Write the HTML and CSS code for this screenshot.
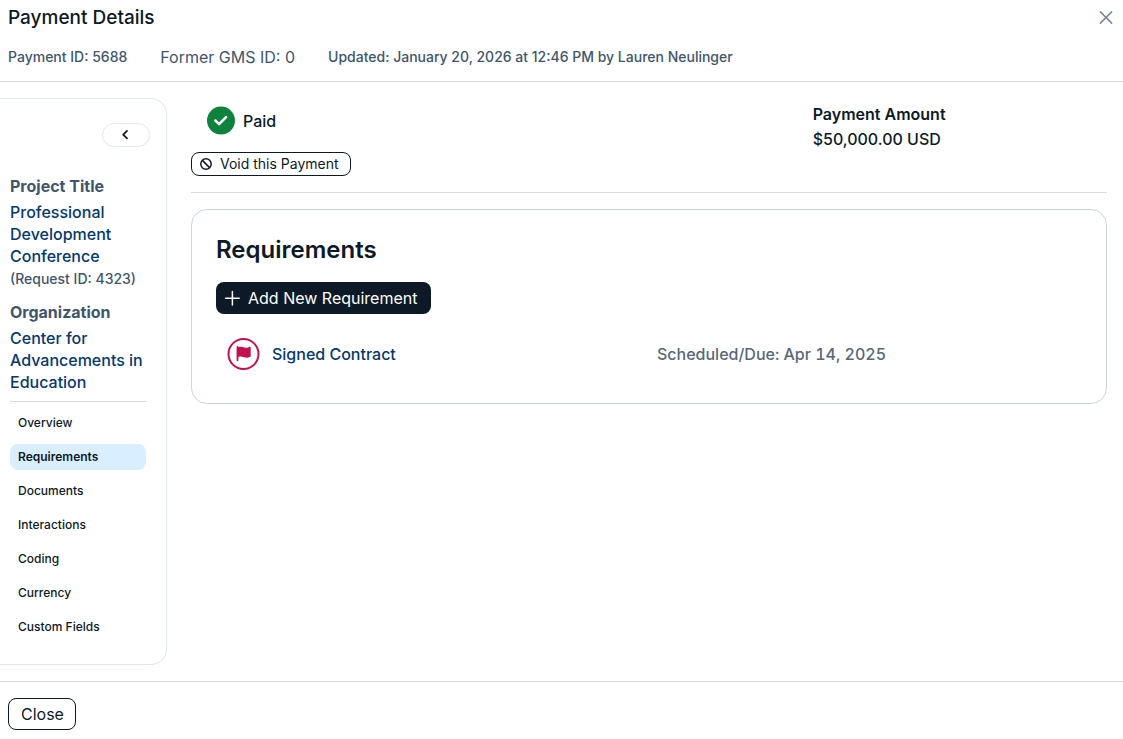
FILE: index.html
```html
<!DOCTYPE html>
<html lang="en">
<head>
<meta charset="utf-8">
<meta name="viewport" content="width=device-width, initial-scale=1">
<title>Payment Details</title>
<link rel="stylesheet" href="styles.css">
</head>
<body>
<div class="dialog">
  <header class="header">
    <div class="header-top">
      <h1 class="title">Payment Details</h1>
      <button class="dismiss" type="button" aria-label="Dismiss">
        <svg width="16" height="16" viewBox="0 0 16 16" fill="none" stroke="currentColor" stroke-width="1.5" stroke-linecap="round"><path d="M2.400 1.900 13.600 13.100M13.600 1.900 2.400 13.100"/></svg>
      </button>
    </div>
    <div class="meta">
      <span>Payment ID: 5688</span>
      <span class="meta-large">Former GMS ID: 0</span>
      <span>Updated: January 20, 2026 at 12:46 PM by Lauren Neulinger</span>
    </div>
  </header>

  <div class="body">
    <aside class="sidebar">
      <button class="collapse" type="button" aria-label="Collapse sidebar">
        <svg width="10" height="12" viewBox="0 0 10 12" fill="none" stroke="currentColor" stroke-width="1.7" stroke-linecap="round" stroke-linejoin="round"><path d="M6 1.800 2.200 5.600 6 9.400"/></svg>
      </button>
      <div class="summary">
        <section class="fact">
          <h2 class="fact-label">Project Title</h2>
          <a class="fact-link" href="#project">Professional Development Conference</a>
          <span class="fact-note">(Request ID: 4323)</span>
        </section>
        <section class="fact">
          <h2 class="fact-label">Organization</h2>
          <a class="fact-link" href="#organization">Center for Advancements in Education</a>
        </section>
      </div>
      <nav class="nav" aria-label="Payment sections">
        <a class="nav-item" href="#overview">Overview</a>
        <a class="nav-item nav-item-active" href="#requirements" aria-current="page">Requirements</a>
        <a class="nav-item" href="#documents">Documents</a>
        <a class="nav-item" href="#interactions">Interactions</a>
        <a class="nav-item" href="#coding">Coding</a>
        <a class="nav-item" href="#currency">Currency</a>
        <a class="nav-item" href="#custom-fields">Custom Fields</a>
      </nav>
    </aside>

    <main class="main">
      <div class="overview">
        <div class="status-column">
          <div class="status">
            <svg width="28" height="28" viewBox="0 0 28 28" fill="none"><circle cx="14" cy="13.600" r="14" fill="#0e813d"/><path d="m8.400 13.500 3.700 3.700 7-7" stroke="#fff" stroke-width="2.500" stroke-linecap="round" stroke-linejoin="round"/></svg>
            <span>Paid</span>
          </div>
          <button class="void" type="button">
            <svg width="12" height="12" viewBox="0 0 12 12" fill="none" stroke="currentColor" stroke-width="1.500"><circle cx="6" cy="6" r="5.200"/><path d="m2.400 2.400 7.200 7.200"/></svg>
            Void this Payment
          </button>
        </div>
        <div class="amount">
          <h2 class="amount-label">Payment Amount</h2>
          <span>$50,000.00 USD</span>
        </div>
      </div>

      <section class="card" id="requirements">
        <h2 class="card-title">Requirements</h2>
        <button class="add" type="button">
          <svg width="16" height="16" viewBox="0 0 16 16" fill="none" stroke="currentColor" stroke-width="1.500" stroke-linecap="round"><path d="M8.400 1.400v13.600M1.600 8.200h13.600"/></svg>
          Add New Requirement
        </button>
        <div class="requirement">
          <div class="requirement-name">
            <svg width="33" height="32" viewBox="0 0 33 32"><circle cx="16.500" cy="16" r="15" fill="none" stroke="#c1124d" stroke-width="2"/><path fill="#c1124d" d="M10.500 8c.5 0 .9.400.9.900v.2c1.600-.5 3.300-.7 5.100.2 1.700.8 3.700.6 5.700-.4.800-.4 1.500.1 1.500.8v8.300c0 .5-.3.900-.7 1.100-2.200.9-4.400 1-6.500 0-1.700-.8-3.400-.6-5.100-.1v3.300c0 .5-.4.900-.9.900s-.9-.4-.9-.9V8.900c0-.5.4-.9.900-.9Z"/></svg>
            <a class="requirement-link" href="#signed-contract">Signed Contract</a>
          </div>
          <span class="requirement-date">Scheduled/Due: Apr 14, 2025</span>
        </div>
      </section>
    </main>
  </div>

  <footer class="footer">
    <button class="close" type="button">Close</button>
  </footer>
</div>
</body>
</html>
```
FILE: styles.css
```css
* {
  box-sizing: border-box;
}

body {
  margin: 0;
  background: #fff;
  color: #0d1926;
  font: 500 16px/24px Inter, "Liberation Sans", sans-serif;
}

h1,
h2 {
  margin: 0;
}

a {
  text-decoration: none;
}

button {
  font: inherit;
  color: inherit;
  background: #fff;
  cursor: pointer;
}

svg {
  display: block;
  flex: none;
}

.dialog {
  display: flex;
  flex-direction: column;
  min-height: 100vh;
}

.header {
  padding: 4px 8px 12px;
  border-bottom: 1px solid #d9dcdf;
}

.header-top {
  display: flex;
  align-items: center;
  justify-content: space-between;
}

.title {
  font-size: 19px;
  line-height: 28px;
  font-weight: 500;
}

.dismiss {
  padding: 1px;
  border: 0;
  color: #7b8794;
}

.meta {
  display: flex;
  align-items: center;
  gap: 33px;
  padding-top: 13px;
  font-size: 14px;
  color: #41566b;
}

.meta-large {
  font-size: 16px;
  font-weight: 400;
}

.body {
  display: flex;
  flex: 1;
  gap: 24px;
  padding: 16px 16px 16px 0;
}

.sidebar {
  display: flex;
  flex-direction: column;
  flex: 0 0 167px;
  padding: 24px 20px 16px 10px;
  border: 1px solid #e1e8f0;
  border-left: 0;
  border-radius: 0 16px 16px 0;
}

.collapse {
  display: flex;
  align-items: center;
  justify-content: center;
  align-self: flex-end;
  width: 48px;
  height: 24px;
  margin-right: -4px;
  padding: 0;
  border: 1px solid #e1e8f0;
  border-radius: 12px;
}

.summary {
  display: flex;
  flex-direction: column;
  gap: 10px;
  margin-top: 28px;
  padding-bottom: 8px;
  border-bottom: 1px solid #d9dcdf;
}

.fact {
  display: flex;
  flex-direction: column;
  line-height: 22px;
}

.fact-label {
  margin-bottom: 4px;
  font-size: 16px;
  font-weight: 700;
  color: #41566b;
}

.fact-link,
.requirement-link {
  color: #05396b;
}

.fact-note {
  font-size: 14px;
  line-height: 24px;
  color: #41566b;
}

.nav {
  display: flex;
  flex-direction: column;
  gap: 8px;
  margin-top: 8px;
}

.nav-item {
  padding: 4px 8px;
  border-radius: 8px;
  font-size: 12px;
  line-height: 18px;
  color: #0d1926;
}

.nav-item-active {
  background: #d9eeff;
  font-weight: 600;
}

.main {
  flex: 1;
  min-width: 0;
}

.overview {
  display: grid;
  grid-template-columns: 2fr 1fr;
  padding-bottom: 16px;
  border-bottom: 1px solid #d9dcdf;
}

.status-column {
  display: flex;
  flex-direction: column;
  align-items: flex-start;
  gap: 17px;
  padding-top: 9px;
}

.status {
  display: flex;
  align-items: center;
  gap: 8px;
  padding-left: 16px;
}

.status svg {
  overflow: visible;
}

.void {
  display: flex;
  align-items: center;
  gap: 8px;
  height: 24px;
  padding: 0 11px 0 8px;
  border: 1px solid #0d1926;
  border-radius: 8px;
  font-size: 14px;
  font-weight: 400;
}

.amount {
  display: flex;
  flex-direction: column;
  gap: 1px;
  padding: 4px 11px;
}

.amount-label {
  font-size: 16px;
  font-weight: 600;
}

.card {
  margin-top: 16px;
  padding: 24px;
  border: 1px solid #cbd5e1;
  border-radius: 16px;
}

.card-title {
  font-size: 24px;
  line-height: 32px;
  font-weight: 600;
}

.add {
  display: flex;
  align-items: center;
  gap: 8px;
  height: 32px;
  margin-top: 16px;
  padding: 0 14px 0 8px;
  border: 0;
  border-radius: 8px;
  background: #0d1926;
  color: #fff;
  font-weight: 400;
}

.requirement {
  display: grid;
  grid-template-columns: 1fr 1fr;
  align-items: center;
  margin-top: 16px;
  padding: 8px 0 9px;
}

.requirement-name {
  display: flex;
  align-items: center;
  gap: 12px;
  padding-left: 11px;
}

.requirement-date {
  padding-left: 8px;
  color: #586877;
  font-variant-numeric: tabular-nums;
}

.footer {
  padding: 16px 8px 9px;
  border-top: 1px solid #d9dcdf;
}

.close {
  display: block;
  height: 32px;
  padding: 0 11px 0 12px;
  border: 1px solid #0d1926;
  border-radius: 8px;
  font-weight: 400;
}
```
